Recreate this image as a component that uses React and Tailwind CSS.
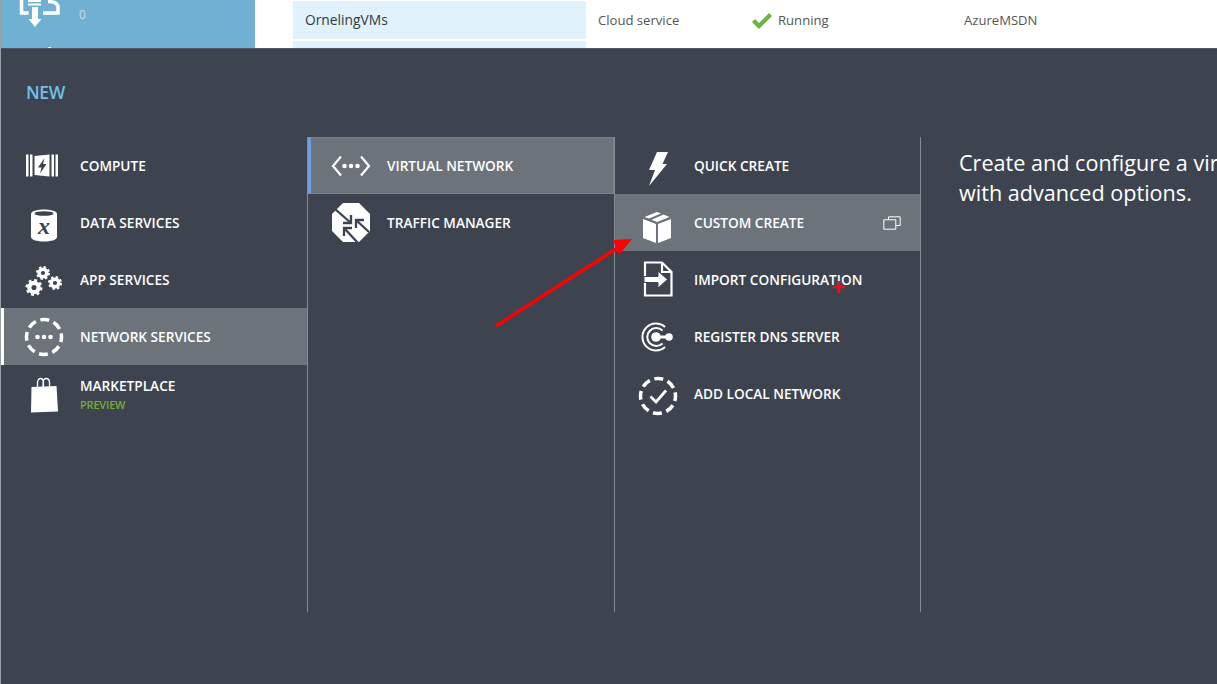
import React from "react";

const font = "font-['Open_Sans','Liberation_Sans',sans-serif]";

function ComputeIcon() {
  return (
    <svg width="34" height="25" viewBox="0 0 34 25" fill="white" className="mr-[4px]">
      <path d="M1 1.500h2.500v22H1zM5 1.500h2.500v22H5zM26.500 1.500H29v22h-2.500zM30.500 1.500h2.500v22h-2.500z" />
      <path fillRule="evenodd" d="M9.500 3L24.500 1.500v22l-15-1.500zM19.500 5l-6.500 9.500h3.500l-1.500 6 6.500-9.500H18z" />
    </svg>
  );
}

function DataIcon() {
  return (
    <svg width="28" height="35" viewBox="0 0 28 35" className="mt-[6px]">
      <path d="M1 6C1 0 27 0 27 6V29c0 6-26 6-26 0z" fill="white" />
      <ellipse cx="14" cy="5.500" rx="9.500" ry="2.300" fill="#3d4450" />
      <text x="14" y="26" textAnchor="middle" fontFamily="Liberation Serif" fontStyle="italic" fontWeight="700" fontSize="24" fill="#3d4450">x</text>
    </svg>
  );
}

function Gear({ cx, cy, r }) {
  const mid = r * 0.82;
  const tooth = (2 * Math.PI * mid) / 16;
  return (
    <g fill="none" stroke="white">
      <circle cx={cx} cy={cy} r={r * 0.55} strokeWidth={r * 0.5} />
      <circle cx={cx} cy={cy} r={mid} strokeWidth={r * 0.36} strokeDasharray={`${tooth} ${tooth}`} />
    </g>
  );
}

function AppIcon() {
  return (
    <svg width="38" height="32" viewBox="0 0 38 32" className="mt-[3px]">
      <Gear cx={9} cy={22.500} r={8.500} />
      <Gear cx={18} cy={8} r={7} />
      <Gear cx={30} cy={18} r={7} />
    </svg>
  );
}

function NetworkIcon() {
  return (
    <svg width="40" height="40" viewBox="0 0 40 40" fill="white" className="ml-[1px] shrink-0">
      <circle cx="20" cy="20" r="17.500" fill="none" stroke="white" strokeWidth="3.500" strokeDasharray="9 4.700" strokeDashoffset="4" />
      <circle cx="13.500" cy="20" r="2.300" />
      <circle cx="20" cy="20" r="2.300" />
      <circle cx="26.500" cy="20" r="2.300" />
    </svg>
  );
}

function BagIcon() {
  return (
    <svg width="30" height="38" viewBox="0 0 30 38" fill="white" className="mt-[3px]">
      <path d="M2.500 11L27.500 10 29 35.500 2 36.500z" />
      <path d="M8.500 15V7c0-6 6-6 6 0v7M14 15V7c0-6 6.500-6 6.500 0v7" fill="none" stroke="white" strokeWidth="1.300" />
    </svg>
  );
}

function VnetIcon() {
  return (
    <svg width="40" height="24" viewBox="0 0 40 24" fill="white">
      <path d="M10 2.500L2 12l8 9.500M30 2.500l8 9.500-8 9.500" fill="none" stroke="white" strokeWidth="2.200" />
      <circle cx="13.500" cy="12" r="2.300" />
      <circle cx="20" cy="12" r="2.300" />
      <circle cx="26.500" cy="12" r="2.300" />
    </svg>
  );
}

function TrafficIcon() {
  return (
    <svg width="38" height="39" viewBox="0 0 38 39">
      <path d="M11 0h16l11 11v17L27 39H11L0 28V11z" fill="white" />
      <path d="M3 6l16 14M19 12v8h-8M37 29L24 17M24 25v-8h8M26 40L12 25M12 33v-8h8" stroke="#3d4450" strokeWidth="2.300" fill="none" />
    </svg>
  );
}

function BoltIcon() {
  return (
    <svg width="20" height="34" viewBox="0 0 20 34" fill="white" className="mt-[7px]">
      <path d="M9 0h11l-5.500 12H19L1 34l6-16H1z" />
    </svg>
  );
}

function BoxIcon() {
  return (
    <svg width="30" height="33" viewBox="0 0 30 33" fill="white" className="mt-[9px] mr-[2px]">
      <path d="M15 1l4 1.500L7 7.500 2.500 6zM21.500 3.500L27.500 6 15 11 9.500 8.800zM1 8l13 5v19L1 27zM29 8v19l-13 5V13z" />
    </svg>
  );
}

function ImportIcon() {
  return (
    <svg width="30" height="36" viewBox="0 0 30 36" className="mb-[2px]">
      <path d="M2 1.500h17L28.500 11v23.500H2z" fill="none" stroke="white" strokeWidth="2.200" />
      <path d="M19 1.500V11h9.500" fill="none" stroke="white" strokeWidth="2.200" />
      <path d="M1 15.500h14v-5.500l9.500 8.500-9.500 8.500v-5.500H1z" fill="white" stroke="#3d4450" strokeWidth="1" />
    </svg>
  );
}

function DnsIcon() {
  return (
    <svg width="34" height="30" viewBox="0 0 34 30" fill="none" stroke="white" strokeWidth="2">
      <path d="M24 5A13.500 13.500 0 1 0 24 25" />
      <path d="M21.500 8.500A9 9 0 1 0 21.500 21.500" />
      <circle cx="15" cy="15" r="4.800" fill="white" stroke="none" />
      <path d="M15 15h12" strokeWidth="3" />
      <circle cx="28" cy="15" r="3.800" fill="white" stroke="none" />
    </svg>
  );
}

function AddLocalIcon() {
  return (
    <svg width="40" height="40" viewBox="0 0 40 40" fill="none" stroke="white" className="mt-[4px]">
      <circle cx="20" cy="20" r="17.500" strokeWidth="3.500" strokeDasharray="9 4.700" strokeDashoffset="4" />
      <path d="M12.500 20.500l5.500 5.500 10-11.500" strokeWidth="2.800" />
    </svg>
  );
}

function WindowIcon() {
  return (
    <svg width="18" height="14" viewBox="0 0 18 14" fill="none" stroke="white" strokeWidth="1">
      <path d="M5.500 3.500V.8h11.700v8.700h-4" />
      <path d="M.8 3.800h12v9.400h-12z" />
    </svg>
  );
}

function MenuRow({ icon, label, sub, right, iconBox }) {
  return (
    <div className="h-[57px] flex items-center relative">
      <div className={`flex justify-center shrink-0 ${iconBox}`}>{icon}</div>
      <div className={`flex flex-col ${sub ? "gap-[3px] pt-px" : ""}`}>
        <span className="text-[13.650px] leading-[18px] font-semibold text-white whitespace-nowrap">{label}</span>
        {sub && <span className="text-[11px] leading-[14px] font-semibold text-[#74ad33] tracking-[-0.2px]">{sub}</span>}
      </div>
      {right && <div className="absolute right-[19px] top-[22px] flex">{right}</div>}
    </div>
  );
}

const leftBox = "w-[39px] mr-[17px]";
const midBox = "w-[40px] mr-[16px]";

export default function App() {
  return (
    <div className={`${font} w-[1217px] h-[684px] overflow-hidden flex flex-col bg-white border-l border-[#9a9fa5]`}>
      {/* list page behind the drawer */}
      <div className="h-12 flex shrink-0">
        <div className="w-[254px] bg-[#70b1d3] flex pl-[18px] overflow-hidden relative">
          <svg width="44" height="30" viewBox="0 0 44 30" fill="none" className="shrink-0">
            <path d="M2.500 0v13h7M29 1.500c8 0 10 3 10 6v5.500H24" stroke="white" strokeWidth="3.500" />
            <path d="M9 1h13M9 4.500h13" stroke="white" strokeWidth="2" />
            <path d="M13 7h6v12h3.500l-6.500 8-6.500-8H13z" fill="white" />
          </svg>
          <span className="ml-[16px] mt-[6px] text-[12px] leading-[18px] text-[#c8dfeb]">0</span>
          <span className="absolute left-[47px] top-[47px] w-[3px] h-px bg-white" />
        </div>
        <div className="w-[38px]" />
        <div className="w-[293px] flex flex-col gap-[2px] pt-px">
          <div className="h-[38px] shrink-0 bg-[#e0f2fb] flex items-center pl-[12px] pt-px text-[13.800px] text-[#333a45]">OrnelingVMs</div>
          <div className="flex-1 bg-[#e0f2fb]" />
        </div>
        <div className="flex-1 flex items-center pb-[8px] pt-px text-[13.100px] text-[#555]">
          <span className="ml-[12px] w-[153px]">Cloud service</span>
          <svg width="22" height="18" viewBox="0 0 22 18" className="shrink-0">
            <path d="M1 10l3-3 4 4L18 1l3 3L8 17z" fill="#6cb33f" />
          </svg>
          <span className="ml-[5px] w-[186px]">Running</span>
          <span>AzureMSDN</span>
        </div>
      </div>

      {/* new drawer */}
      <div className="flex-1 bg-[#3d4450] border-t border-[#4f565f] relative">
        <div className="pl-[25px] pt-[31px] h-[88px] text-[17.500px] leading-[24px] font-semibold text-[#70c0e8] tracking-[-0.4px]">NEW</div>
        <div className="flex h-[475px]">
          <div className="w-[307px] shrink-0 border-r border-[#868b92]">
            <div className="pl-[23px]">
              <MenuRow icon={<ComputeIcon />} label="COMPUTE" iconBox={leftBox} />
              <MenuRow icon={<DataIcon />} label="DATA SERVICES" iconBox={leftBox} />
              <MenuRow icon={<AppIcon />} label="APP SERVICES" iconBox={leftBox} />
            </div>
            <div className="bg-[#6c737b] border-l-[3px] border-white pl-[20px]">
              <MenuRow icon={<NetworkIcon />} label="NETWORK SERVICES" iconBox={leftBox} />
            </div>
            <div className="pl-[23px]">
              <MenuRow icon={<BagIcon />} label="MARKETPLACE" sub="PREVIEW" iconBox={leftBox} />
            </div>
          </div>

          <div className="w-[307px] shrink-0 border-r border-[#868b92]">
            <div className="h-[57px] bg-[#6c737b] border border-[#5b86c4] border-l-[3px] border-l-[#6f9fe0] pl-[20px] flex items-center">
              <div className={`${midBox} flex justify-center`}><VnetIcon /></div>
              <span className="text-[13.650px] leading-[18px] font-semibold text-white">VIRTUAL NETWORK</span>
            </div>
            <div className="pl-[23px]">
              <MenuRow icon={<TrafficIcon />} label="TRAFFIC MANAGER" iconBox={midBox} />
            </div>
          </div>

          <div className="w-[306px] shrink-0 border-r border-[#868b92]">
            <div className="pl-[23px]">
              <MenuRow icon={<BoltIcon />} label="QUICK CREATE" iconBox={midBox} />
            </div>
            <div className="bg-[#6c737b] pl-[23px]">
              <MenuRow icon={<BoxIcon />} label="CUSTOM CREATE" iconBox={midBox} right={<WindowIcon />} />
            </div>
            <div className="pl-[23px]">
              <MenuRow icon={<ImportIcon />} label="IMPORT CONFIGURATION" iconBox={midBox} />
              <MenuRow icon={<DnsIcon />} label="REGISTER DNS SERVER" iconBox={midBox} />
              <MenuRow icon={<AddLocalIcon />} label="ADD LOCAL NETWORK" iconBox={midBox} />
            </div>
          </div>

          <div className="flex-1 pl-[38px] pt-[11px] text-[21.600px] leading-[30px] text-white whitespace-nowrap overflow-hidden">
            <div>Create and configure a virtual network</div>
            <div>with advanced options.</div>
          </div>
        </div>

        {/* annotations drawn on the screenshot */}
        <svg width="150" height="100" viewBox="0 0 150 100" className="absolute left-[490px] top-[187px]">
          <path d="M5 90L128 11" stroke="#ff0000" strokeWidth="3.500" />
          <path d="M141 3L122 4l6 15z" fill="#ff0000" />
        </svg>
        <svg width="12" height="12" viewBox="0 0 12 12" className="absolute left-[832px] top-[232px]">
          <path d="M0 6h12M6 0v12" stroke="#e8101c" strokeWidth="2.500" />
        </svg>
      </div>
    </div>
  );
}
